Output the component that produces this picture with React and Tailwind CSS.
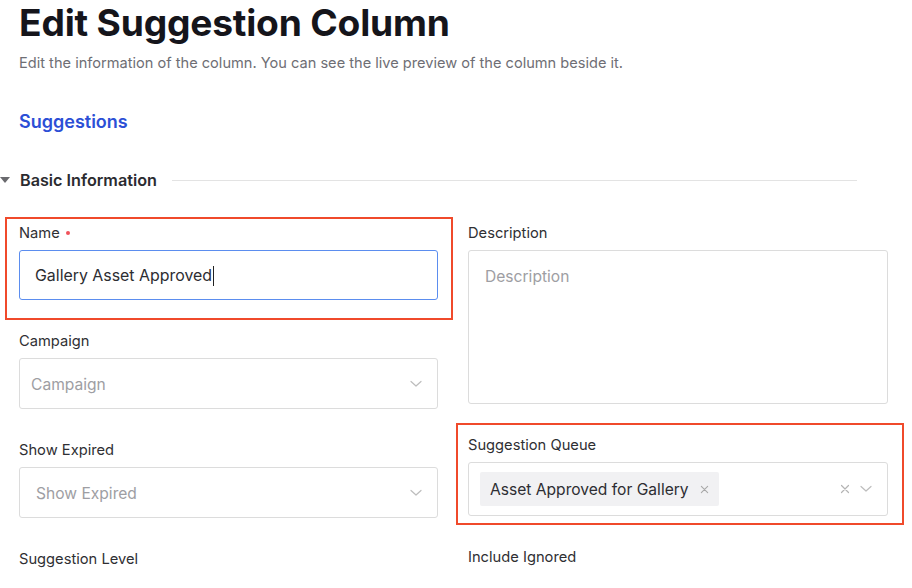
import React from "react";

const Chevron = ({ className = "" }) => (
  <svg width="12" height="8" viewBox="0 0 12 8" className={className} fill="none">
    <path d="M1 1.5 L6 6 L11 1.5" stroke="#bdbdbd" strokeWidth="1.2" strokeLinecap="round" strokeLinejoin="round" />
  </svg>
);

const Cross = ({ size = 10, color = "#a8a8a8" }) => (
  <svg width={size} height={size} viewBox="0 0 10 10" fill="none">
    <path d="M1.5 1.5 L8.5 8.5 M8.5 1.5 L1.5 8.5" stroke={color} strokeWidth="1.2" strokeLinecap="round" />
  </svg>
);

const Label = ({ children }) => (
  <div className="h-[18px] leading-[18px] text-[14.7px] text-[#2f2f33] mb-[8px] flex items-center">{children}</div>
);

const Select = ({ placeholder, padLeft = "pl-[11px]" }) => (
  <div className={`h-[51px] border border-[#dcdcdc] rounded-[3px] flex items-center justify-between ${padLeft} pr-[15px] bg-white`}>
    <span className="text-[15.6px] text-[#9e9ea3] mt-[2px]">{placeholder}</span>
    <Chevron />
  </div>
);

export default function App() {
  return (
    <div className="w-[912px] h-[588px] overflow-hidden bg-white" style={{ fontFamily: "Inter, 'Noto Sans', sans-serif" }}>
      <div className="pl-[19px]">
        <h1 className="text-[37.2px] leading-[46px] font-bold text-[#15151b] tracking-[-0.2px]">Edit Suggestion Column</h1>
        <p className="mt-[7px] text-[14.6px] leading-[20px] text-[#6e6e74]">
          Edit the information of the column. You can see the live preview of the column beside it.
        </p>
        <div className="mt-[37px] text-[18px] leading-[24px] font-semibold text-[#2c4fd6]">Suggestions</div>
      </div>

      <div className="mt-[36px] flex items-center h-[20px] pr-[55px]">
        <svg width="10" height="6" viewBox="0 0 10 6">
          <path d="M0 0 H10 L5 6 Z" fill="#6a6a6e" />
        </svg>
        <span className="ml-[10px] text-[16.2px] font-semibold text-[#2b2b30]">Basic Information</span>
        <div className="ml-[15px] flex-1 h-px bg-[#e3e3e3]" />
      </div>

      <div className="mt-[34px] pl-[19px] flex gap-[30px]">
        {/* Left column */}
        <div className="w-[419px] flex flex-col">
          <div className="relative">
            <div className="absolute left-[-14px] right-[-15px] top-[-7px] bottom-[-20px] border-2 border-[#f04a2b] pointer-events-none" />
            <Label>
              Name <span className="ml-[6px] w-[4px] h-[4px] rounded-full bg-[#f0525a] inline-block" />
            </Label>
            <div className="h-[50px] border-[1.5px] border-[#5b8def] rounded-[3px] flex items-center pl-[15px]">
              <span className="text-[15.9px] text-[#2d2d32] mt-[2px]">Gallery Asset Approved</span>
              <span className="w-px h-[20px] bg-[#222] ml-[1px] mt-[2px]" />
            </div>
          </div>

          <div className="mt-[32px]">
            <Label>Campaign</Label>
            <Select placeholder="Campaign" />
          </div>

          <div className="mt-[32px]">
            <Label>Show Expired</Label>
            <Select placeholder="Show Expired" padLeft="pl-[16px]" />
          </div>

          <div className="mt-[32px]">
            <Label>Suggestion Level</Label>
          </div>
        </div>

        {/* Right column */}
        <div className="w-[420px] flex flex-col">
          <div>
            <Label>Description</Label>
            <div className="h-[154px] border border-[#dcdcdc] rounded-[3px] pl-[16px] pt-[13px]">
              <span className="text-[15.6px] text-[#9e9ea3]">Description</span>
            </div>
          </div>

          <div className="mt-[32px] relative">
            <div className="absolute left-[-12px] right-[-16px] top-[-13px] bottom-[-9px] border-2 border-[#f04a2b] pointer-events-none" />
            <Label>Suggestion Queue</Label>
            <div className="h-[54px] border border-[#dcdcdc] rounded-[3px] flex items-center pl-[11px] pr-[15px]">
              <div className="h-[34px] w-[239px] bg-[#f1f1f3] rounded-[2px] flex items-center pl-[10px] pr-[10px]">
                <span className="text-[15.6px] text-[#2d2d32] mt-[2px]">Asset Approved for Gallery</span>
                <span className="ml-auto">
                  <Cross size={9} />
                </span>
              </div>
              <div className="ml-auto flex items-center gap-[10px]">
                <Cross size={10} color="#b4b4b4" />
                <Chevron />
              </div>
            </div>
          </div>

          <div className="mt-[32px]">
            <Label>Include Ignored</Label>
          </div>
        </div>
      </div>
    </div>
  );
}
